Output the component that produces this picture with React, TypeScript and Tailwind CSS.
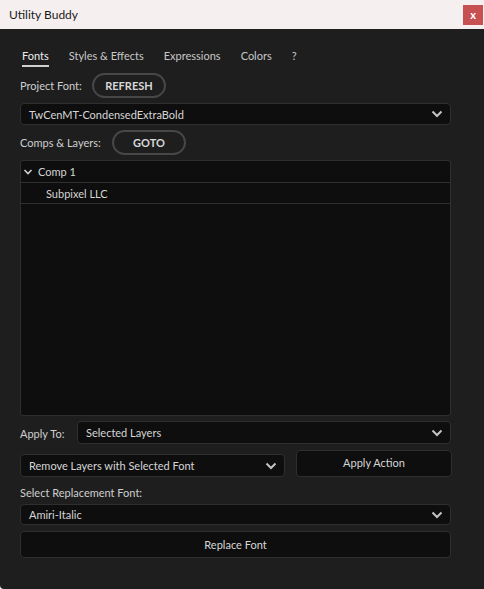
import React from "react";

const FONT = { fontFamily: "Lato, 'Liberation Sans', sans-serif" };

function Chevron({ className = "" }: { className?: string }) {
  return (
    <svg width="12" height="8" viewBox="0 0 12 8" className={className}>
      <path d="M1.5 1.5 L6 6 L10.5 1.5" fill="none" stroke="#c4c4c4" strokeWidth="2" />
    </svg>
  );
}

function Select({ label, className = "" }: { label: string; className?: string }) {
  return (
    <div
      className={`flex items-center justify-between rounded-[4px] border border-[#2f2f2f] bg-[#0e0e0e] pl-[8px] pr-[7px] text-[11px] text-[#d6d6d6] ${className}`}
    >
      <span className="pt-[2px]">{label}</span>
      <Chevron />
    </div>
  );
}

function Pill({ label, className = "" }: { label: string; className?: string }) {
  return (
    <div
      className={`flex h-[25px] w-[74px] items-center justify-center rounded-full border-2 border-[#474747] pt-[1px] text-[11px] font-bold text-[#d8d8d8] ${className}`}
    >
      {label}
    </div>
  );
}

export default function App() {
  const tabs = ["Fonts", "Styles & Effects", "Expressions", "Colors", "?"];

  return (
    <div className="h-[589px] w-[484px] bg-white" style={FONT}>
      {/* title bar */}
      <div className="flex h-[29px] items-center justify-between bg-[#f6efef] pl-[9px]">
        <span className="text-[12px] text-[#1a1a1a]">Utility Buddy</span>
        <div className="mr-[1px] flex h-[20px] w-[20px] items-center justify-center bg-[#c75050] text-[11px] font-bold leading-none text-white">
          x
        </div>
      </div>

      {/* body */}
      <div className="flex h-[560px] flex-col rounded-bl-[4px] bg-[#1e1e1e] pl-[20px] pr-[33px] pt-[19px] text-[11px] text-[#cfcfcf]">
        {/* tabs */}
        <div className="flex gap-[20px] pl-[2px]">
          {tabs.map((t, i) => (
            <div
              key={t}
              className={`border-b-2 pb-[1px] leading-[16px] ${
                i === 0 ? "border-[#d0d0d0] text-[#ececec]" : "border-transparent text-[#c8c8c8]"
              }`}
            >
              {t}
            </div>
          ))}
        </div>

        <div className="mt-[6px] flex items-center">
          <span className="w-[72px] pt-[1px]">Project Font:</span>
          <Pill label="REFRESH" />
        </div>

        <Select label="TwCenMT-CondensedExtraBold" className="mt-[5px] h-[22px]" />

        <div className="mt-[5px] flex items-center">
          <span className="w-[92px] pt-[1px]">Comps &amp; Layers:</span>
          <Pill label="GOTO" />
        </div>

        {/* tree */}
        <div className="mt-[5px] h-[256px] rounded-[3px] border border-[#2f2f2f] bg-[#0e0e0e] text-[#d4d4d4]">
          <div className="flex h-[22px] items-center border-b border-[#2f2f2f] pl-[2px]">
            <svg width="10" height="8" viewBox="0 0 10 8" className="mr-[5px]">
              <path d="M1.5 2 L5 5.5 L8.5 2" fill="none" stroke="#cfcfcf" strokeWidth="1.6" />
            </svg>
            <span className="pt-[2px]">Comp 1</span>
          </div>
          <div className="flex h-[21px] items-center border-b border-[#2f2f2f] pl-[25px] pt-[2px]">Subpixel LLC</div>
        </div>

        <div className="mt-[5px] flex items-center">
          <span className="w-[57px] pt-[4px]">Apply To:</span>
          <Select label="Selected Layers" className="h-[23px] flex-1" />
        </div>

        <div className="mt-[6px] flex items-end">
          <Select label="Remove Layers with Selected Font" className="h-[23px] w-[265px]" />
          <div className="ml-[11px] -mr-[1px] flex h-[27px] flex-1 items-center justify-center rounded-[4px] border border-[#2f2f2f] bg-[#0e0e0e] text-[#d6d6d6]">
            Apply Action
          </div>
        </div>

        <div className="mt-[7px] pt-[1px] leading-[16px]">Select Replacement Font:</div>

        <Select label="Amiri-Italic" className="mt-[3px] h-[21px]" />

        <div className="mt-[6px] flex h-[27px] items-center justify-center rounded-[4px] border border-[#2f2f2f] bg-[#0e0e0e] pt-[2px] text-[#d6d6d6]">
          Replace Font
        </div>
      </div>
    </div>
  );
}
